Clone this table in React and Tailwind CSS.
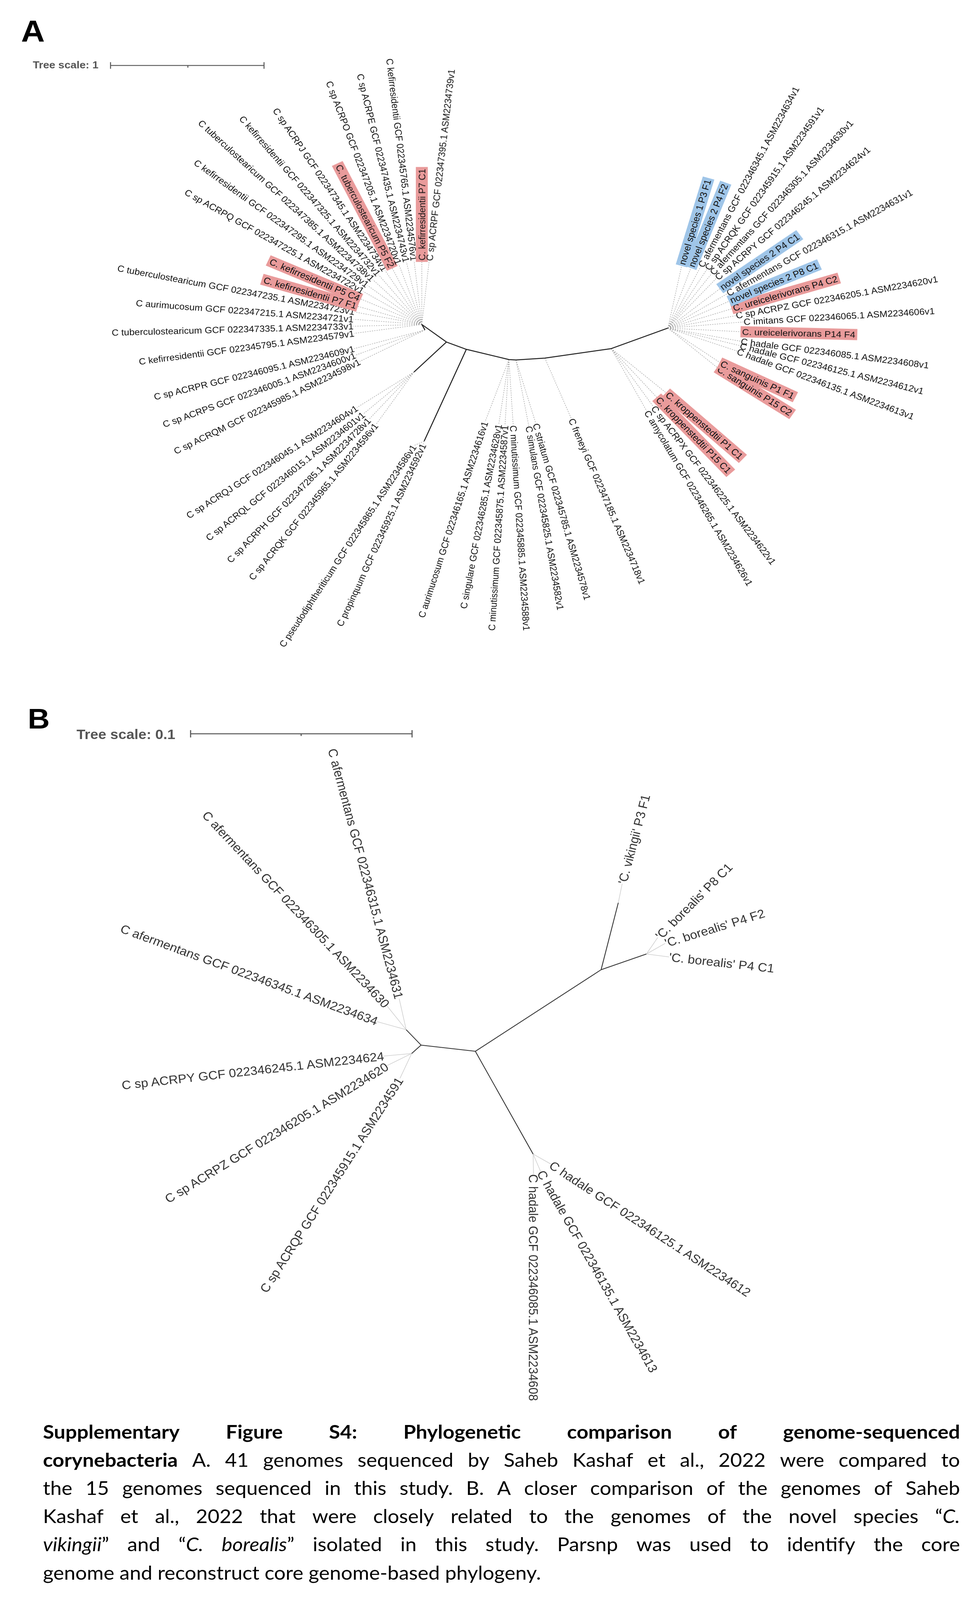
import React from 'react';

const AW = {
  ' ': 278, '.': 278, ',': 278, "'": 191, '-': 333, ':': 278,
  a: 556, b: 556, c: 500, d: 556, e: 556, f: 278, g: 556, h: 556, i: 222, j: 222, k: 500, l: 222, m: 833,
  n: 556, o: 556, p: 556, q: 556, r: 333, s: 500, t: 278, u: 556, v: 500, w: 722, x: 500, y: 500, z: 500,
  A: 667, B: 667, C: 722, D: 722, E: 667, F: 611, G: 778, H: 722, I: 278, J: 500, K: 667, L: 556, M: 833,
  N: 722, O: 778, P: 667, Q: 778, R: 722, S: 667, T: 611, U: 722, V: 667, W: 944, X: 667, Y: 667, Z: 611,
};
const tw = (s, fs) => {
  let w = 0;
  for (const c of s) w += AW[c] ?? 556;
  return (w * fs) / 1000;
};
const norm = (t) => {
  let x = ((t % 360) + 360) % 360;
  if (x > 180) x -= 360;
  return x;
};

const RED = '#e99b9b';
const BLUE = '#9fc5e8';

function Leaf({ x, y, t, text, fs, hl, fill }) {
  const n = norm(t);
  const left = Math.abs(n) > 90;
  const rot = left ? n - 180 : n;
  const w = tw(text, fs);
  const h = fs * 1.25;
  return (
    <g transform={`translate(${x} ${y}) rotate(${rot})`}>
      {hl && <rect x={left ? -w - 5 : -4} y={-h / 2} width={w + 9} height={h} fill={hl} />}
      <text x={0} y={0} dy="0.35em" textAnchor={left ? 'end' : 'start'} fontSize={fs} fill={fill}>
        {text}
      </text>
    </g>
  );
}

const N1 = [1080, 887];
const N1b = [1088, 902];
const N2 = [1060, 1017];
const N3 = [1086, 1206];
const N4a = [1303, 983];
const N4b = [1321, 984];
const A5 = [1395, 979];
const N5 = [1565, 953];
const N6 = [1710, 897];

const upper = [
  ['C kefirresidentii GCF 022345795.1 ASM2234579v1', 172],
  ['C tuberculostearicum GCF 022347335.1 ASM2234733v1', 178.4],
  ['C aurimucosum GCF 022347215.1 ASM2234721v1', 184.6],
  ['C tuberculostearicum GCF 022347235.1 ASM2234723v1', 191.2],
  ['C. kefirresidentii P7 F1', 196.8, RED],
  ['C. kefirresidentii P5 C4', 204, RED],
  ['C sp ACRPQ GCF 022347225.1 ASM2234722v1', 211],
  ['C kefirresidentii GCF 022347295.1 ASM2234729v1', 217.5],
  ['C tuberculostearicum GCF 022347385.1 ASM2234738v1', 224.3],
  ['C kefirresidentii GCF 022347325.1 ASM2234732v1', 230.8],
  ['C sp ACRPJ GCF 022347345.1 ASM2234734v1', 237.5],
  ['C. tuberculostearicum P5 F2', 243.8, RED],
  ['C sp ACRPO GCF 022347205.1 ASM2234720v1', 250.3],
  ['C sp ACRPE GCF 022347435.1 ASM2234743v1', 257],
  ['C kefirresidentii GCF 022345765.1 ASM2234576v1', 263.5],
  ['C. kefirresidentii P7 C1', 270, RED],
  ['C sp ACRPF GCF 022347395.1 ASM2234739v1', 276.2],
].map(([text, t, hl]) => {
  const r = (t * Math.PI) / 180;
  return { text, t, hl, node: N1, x: N1[0] + 175 * Math.cos(r), y: N1[1] + 175 * Math.sin(r) };
});

const rest = [
  ['C sp ACRPR GCF 022346095.1 ASM2234609v1', 907, 953, 165.5, N1b],
  ['C sp ACRPS GCF 022346005.1 ASM2234600v1', 910, 971, 158.9, N1b],
  ['C sp ACRQM GCF 022345985.1 ASM2234598v1', 921, 988, 152.5, N1b],
  ['C sp ACRQJ GCF 022346045.1 ASM2234604v1', 914, 1114, 145.6, N2],
  ['C sp ACRQL GCF 022346015.1 ASM2234601v1', 931, 1131, 139.5, N2],
  ['C sp ACRPH GCF 022347285.1 ASM2234728v1', 945, 1146, 132.8, N2],
  ['C sp ACRQK GCF 022345965.1 ASM2234596v1', 963, 1160, 127.2, N2],
  ['C pseudodiphtheriticum GCF 022345865.1 ASM2234586v1', 1060, 1218, 121.7, N3],
  ['C propinquum GCF 022345925.1 ASM2234592v1', 1084, 1214, 113.4, N3],
  ['C aurimucosum GCF 022346165.1 ASM2234616v1', 1242, 1153, 107, N4a],
  ['C singulare GCF 022346285.1 ASM2234628v1', 1277, 1160, 100.2, N4a],
  ['C minutissimum GCF 022345875.1 ASM2234587v1', 1293, 1163, 93.5, N4a],
  ['C minutissimum GCF 022345885.1 ASM2234588v1', 1314, 1163, 86.5, N4a],
  ['C simulans GCF 022345825.1 ASM2234582v1', 1354, 1165, 80.8, N4b],
  ['C striatum GCF 022345785.1 ASM2234578v1', 1372, 1158, 74.6, N4b],
  ['C freneyi GCF 022347185.1 ASM2234718v1', 1463, 1145, 68, A5],
  ['C amycolatum GCF 022346265.1 ASM2234626v1', 1656, 1124, 60.9, N5],
  ['C sp ACRPX GCF 022346225.1 ASM2234622v1', 1673, 1112, 54.3, N5],
  ['C. kroppenstedtii P15 C1', 1684, 1089, 47.6, N5, RED],
  ['C. kroppenstedtii P1 C1', 1708, 1076, 42.6, N5, RED],
  ['C. sanguinis P15 C2', 1839, 1007, 33.5, N6, RED],
  ['C. sanguinis P1 F1', 1846, 993, 26, N6, RED],
  ['C hadale GCF 022346135.1 ASM2234613v1', 1888, 960, 21.7, N6],
  ['C hadale GCF 022346125.1 ASM2234612v1', 1895, 945, 14.9, N6],
  ['C hadale GCF 022346085.1 ASM2234608v1', 1897, 933, 7.8, N6],
  ['C. ureicelerivorans P14 F4', 1900, 907, 1.5, N6, RED],
  ['C imitans GCF 022346065.1 ASM2234606v1', 1904, 880, -3.5, N6],
  ['C sp ACRPZ GCF 022346205.1 ASM2234620v1', 1884, 863, -11, N6],
  ['C. ureicelerivorans P4 C2', 1877, 843, -17, N6, RED],
  ['novel species 2 P8 C1', 1870, 822, -23.5, N6, BLUE],
  ['C afermentans GCF 022346315.1 ASM2234631v1', 1862, 803, -30.6, N6],
  ['novel species 2 P4 C1', 1846, 787, -35.8, N6, BLUE],
  ['C sp ACRPY GCF 022346245.1 ASM2234624v1', 1834, 761, -42.3, N6],
  ['C afermentans GCF 022346305.1 ASM2234630v1', 1822, 748, -49.3, N6],
  ['C sp ACRQK GCF 022345915.1 ASM2234591v1', 1810, 736, -56.4, N6],
  ['C afermentans GCF 022346345.1 ASM2234634v1', 1794, 729, -63.4, N6],
  ['novel species 2 P4 F2', 1770, 729, -69, N6, BLUE],
  ['novel species 1 P3 F1', 1746, 723, -73.9, N6, BLUE],
].map(([text, x, y, t, node, hl]) => ({ text, x, y, t, node, hl }));

const leavesA = [...upper, ...rest];

const BU = [1040, 2815];
const BL = [1054, 2880];
const BV = [1583, 2468];
const BB = [1655, 2608];
const BH = [1365, 3155];

const leavesB = [
  ['C afermentans GCF 022346315.1 ASM2234631', 1022, 2730, 255.9, BU],
  ['C afermentans GCF 022346305.1 ASM2234630', 991, 2750, 228.5, BU],
  ['C afermentans GCF 022346345.1 ASM2234634', 966, 2793, 201.3, BU],
  ['C sp ACRPY GCF 022346245.1 ASM2234624', 983, 2887, 173.2, BL],
  ['C sp ACRPZ GCF 022346205.1 ASM2234620', 991, 2913, 147, BL],
  ['C sp ACRQP GCF 022345915.1 ASM2234591', 1024, 2948, 121, BL],
  ["'C. vikingii' P3 F1", 1593, 2416, -76, BV],
  ["'C. borealis' P8 C1", 1684, 2563, -46.9, BB],
  ["'C. borealis' P4 F2", 1703, 2579, -18.2, BB],
  ["'C. borealis' P4 C1", 1713, 2616, 6.7, BB],
  ['C hadale GCF 022346125.1 ASM2234612', 1410, 3182, 34.9, BH],
  ['C hadale GCF 022346135.1 ASM2234613', 1384, 3202, 62, BH],
  ['C hadale GCF 022346085.1 ASM2234608', 1366, 3210, 90, BH],
].map(([text, x, y, t, node]) => ({ text, x, y, t, node }));

const W = (s, st = '') => s.split(' ').map((w) => [[w, st]]);
const lines = [
  W('Supplementary Figure S4: Phylogenetic comparison of genome-sequenced', 'b'),
  [...W('corynebacteria', 'b'), ...W('A. 41 genomes sequenced by Saheb Kashaf et al., 2022 were compared to')],
  W('the 15 genomes sequenced in this study. B. A closer comparison of the genomes of Saheb'),
  [...W('Kashaf et al., 2022 that were closely related to the genomes of the novel species'), [['“', ''], ['C.', 'i']]],
  [
    [['vikingii', 'i'], ['”', '']],
    ...W('and'),
    [['“', ''], ['C.', 'i']],
    [['borealis', 'i'], ['”', '']],
    ...W('isolated in this study. Parsnp was used to identify the core'),
  ],
];

function Word({ segs }) {
  return (
    <span className="whitespace-nowrap">
      {segs.map(([t, s], i) => (
        <span key={i} className={s === 'b' ? 'font-bold' : s === 'i' ? 'italic' : ''}>
          {t}
        </span>
      ))}
    </span>
  );
}

export default function App() {
  return (
    <div className="w-[2504px] h-[4096px] overflow-hidden bg-white text-black">
      <div className="w-[2504px] h-[4374px] flex flex-col origin-top scale-y-[0.93644]">
        {/* Panel A */}
        <div className="grid h-[1850px] shrink-0 overflow-hidden">
          <svg
            className="col-start-1 row-start-1 font-['Liberation_Sans',Arial,sans-serif]"
            width="2504"
            height="1850"
            viewBox="0 0 2504 1850"
          >
            <text x="84" y="177" dy="0.35em" fontSize="28" fontWeight="700" fill="#555">
              Tree scale: 1
            </text>
            <g stroke="#555" strokeWidth="2.5" fill="none">
              <line x1="283" y1="179" x2="676" y2="179" />
              <line x1="283" y1="170" x2="283" y2="188" />
              <line x1="676" y1="170" x2="676" y2="188" />
              <line x1="481" y1="179" x2="481" y2="185" />
            </g>
            <g stroke="#9a9a9a" strokeWidth="1.3" strokeDasharray="3 3" fill="none">
              {leavesA.map((l, i) => (
                <line key={i} x1={l.node[0]} y1={l.node[1]} x2={l.x} y2={l.y} />
              ))}
            </g>
            <g stroke="#222" strokeWidth="2.6" fill="none" strokeLinejoin="round">
              <polyline points="1080,887 1143,935 1194,955 1303,983 1321,984 1395,979 1565,953 1710,897" />
              <line x1="1143" y1="935" x2="1060" y2="1017" />
              <line x1="1194" y1="955" x2="1086" y2="1206" />
              <line x1="1080" y1="887" x2="1088" y2="902" />
            </g>
            {leavesA.map((l, i) => (
              <Leaf key={i} x={l.x} y={l.y} t={l.t} text={l.text} fs={24.5} hl={l.hl} fill="#111" />
            ))}
          </svg>
          <div className="col-start-1 row-start-1 self-start justify-self-start pl-[54px] pt-[43px] text-[84px] leading-none font-bold font-['Liberation_Sans',Arial,sans-serif]">
            A
          </div>
        </div>

        {/* Panel B */}
        <div className="grid h-[2000px] shrink-0 overflow-hidden">
          <svg
            className="col-start-1 row-start-1 font-['Liberation_Sans',Arial,sans-serif]"
            width="2504"
            height="2000"
            viewBox="0 1850 2504 2000"
          >
            <text x="196" y="2007" dy="0.35em" fontSize="37" fontWeight="700" fill="#555">
              Tree scale: 0.1
            </text>
            <g stroke="#555" strokeWidth="2.8" fill="none">
              <line x1="488" y1="2006" x2="1055" y2="2006" />
              <line x1="488" y1="1996" x2="488" y2="2016" />
              <line x1="1055" y1="1996" x2="1055" y2="2016" />
              <line x1="771" y1="2006" x2="771" y2="2012" />
            </g>
            <g stroke="#cfcfcf" strokeWidth="1.6" fill="none">
              {leavesB.map((l, i) => (
                <line key={i} x1={l.node[0]} y1={l.node[1]} x2={l.x} y2={l.y} />
              ))}
            </g>
            <g stroke="#333" strokeWidth="2.2" fill="none">
              <line x1="1078" y1="2857" x2="1217" y2="2874" />
              <line x1="1217" y1="2874" x2="1539" y2="2651" />
              <line x1="1539" y1="2651" x2="1583" y2="2468" />
              <line x1="1539" y1="2651" x2="1655" y2="2608" />
              <line x1="1217" y1="2874" x2="1365" y2="3155" />
              <line x1="1078" y1="2857" x2="1040" y2="2815" />
              <line x1="1078" y1="2857" x2="1054" y2="2880" />
            </g>
            {leavesB.map((l, i) => (
              <Leaf key={i} x={l.x} y={l.y} t={l.t} text={l.text} fs={33} fill="#333" />
            ))}
          </svg>
          <div className="col-start-1 row-start-1 self-start justify-self-start pl-[71px] pt-[76px] text-[78px] leading-none font-bold font-['Liberation_Sans',Arial,sans-serif]">
            B
          </div>
        </div>

        {/* Caption */}
        <div className="shrink-0 pt-[25px] pl-[110px] w-[2458px] font-['Lato',sans-serif] text-[52px] leading-[77px]">
          {lines.map((ws, i) => (
            <div key={i} className="flex justify-between">
              {ws.map((segs, j) => (
                <Word key={j} segs={segs} />
              ))}
            </div>
          ))}
          <div>genome and reconstruct core genome-based phylogeny.</div>
        </div>
      </div>
    </div>
  );
}
